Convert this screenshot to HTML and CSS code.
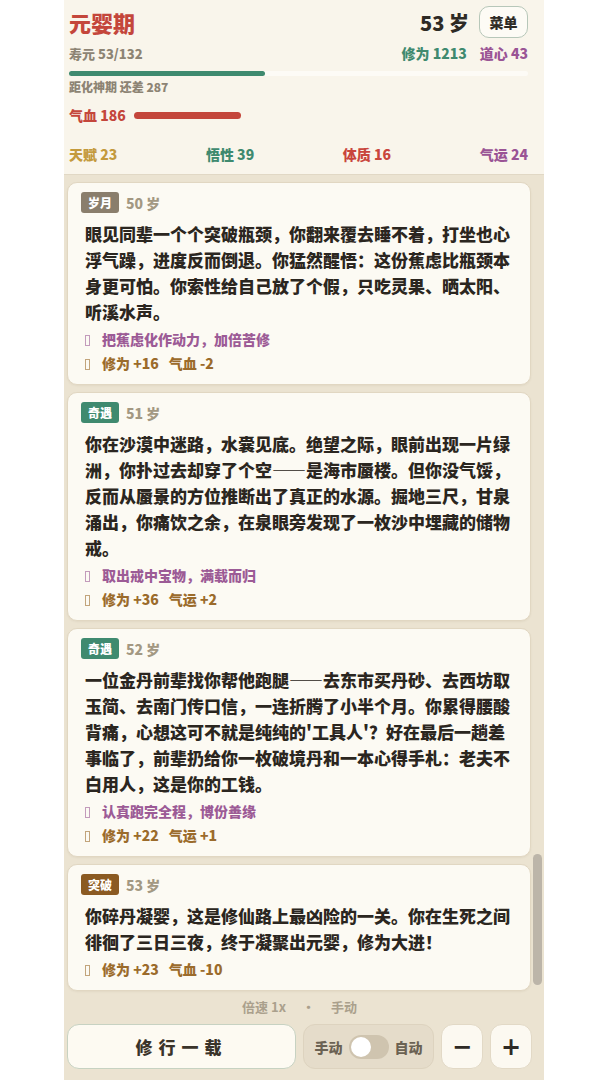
FILE: index.html
```html
<!DOCTYPE html>
<html lang="zh">
<head>
  <meta charset="UTF-8" />
  <title>修仙人生</title>
  <link rel="stylesheet" href="styles.css">
</head>
<body>
  <div class="app">

    <header class="status">
      <div class="row top">
        <h1 class="realm">元婴期</h1>
        <div class="age-box">
          <span class="age">53 岁</span>
          <button class="menu-btn">菜单</button>
        </div>
      </div>
      <div class="row meta">
        <span class="life">寿元 53/132</span>
        <span class="cult">
          <b class="green">修为 1213</b>
          <b class="purple">道心 43</b>
        </span>
      </div>
      <div class="bar"><div class="bar-fill" style="width: 42.6%"></div></div>
      <div class="next">距化神期 还差 287</div>
      <div class="hp">
        <span>气血 186</span>
        <div class="hp-bar" style="width: 107px"></div>
      </div>
      <div class="stats">
        <span class="gold">天赋 23</span>
        <span class="green">悟性 39</span>
        <span class="red">体质 16</span>
        <span class="purple">气运 24</span>
      </div>
    </header>

    <main class="log">
      <div class="scroll-thumb"></div>

      <div class="card">
        <div class="card-head"><span class="tag tag-time">岁月</span><span class="card-age">50 岁</span></div>
        <p class="story">眼见同辈一个个突破瓶颈，你翻来覆去睡不着，打坐也心浮气躁，进度反而倒退。你猛然醒悟：这份蕉虑比瓶颈本身更可怕。你索性给自己放了个假，只吃灵果、晒太阳、听溪水声。</p>
        <div class="choice"><i class="tofu"></i>把蕉虑化作动力，加倍苦修</div>
        <div class="effect"><i class="tofu"></i>修为 +16<span>气血 -2</span></div>
      </div>

      <div class="card">
        <div class="card-head"><span class="tag tag-luck">奇遇</span><span class="card-age">51 岁</span></div>
        <p class="story">你在沙漠中迷路，水囊见底。绝望之际，眼前出现一片绿洲，你扑过去却穿了个空——是海市蜃楼。但你没气馁，反而从蜃景的方位推断出了真正的水源。掘地三尺，甘泉涌出，你痛饮之余，在泉眼旁发现了一枚沙中埋藏的储物戒。</p>
        <div class="choice"><i class="tofu"></i>取出戒中宝物，满载而归</div>
        <div class="effect"><i class="tofu"></i>修为 +36<span>气运 +2</span></div>
      </div>

      <div class="card">
        <div class="card-head"><span class="tag tag-luck">奇遇</span><span class="card-age">52 岁</span></div>
        <p class="story">一位金丹前辈找你帮他跑腿——去东市买丹砂、去西坊取玉简、去南门传口信，一连折腾了小半个月。你累得腰酸背痛，心想这可不就是纯纯的'工具人'？好在最后一趟差事临了，前辈扔给你一枚破境丹和一本心得手札：老夫不白用人，这是你的工钱。</p>
        <div class="choice"><i class="tofu"></i>认真跑完全程，博份善缘</div>
        <div class="effect"><i class="tofu"></i>修为 +22<span>气运 +1</span></div>
      </div>

      <div class="card">
        <div class="card-head"><span class="tag tag-break">突破</span><span class="card-age">53 岁</span></div>
        <p class="story">你碎丹凝婴，这是修仙路上最凶险的一关。你在生死之间徘徊了三日三夜，终于凝聚出元婴，修为大进！</p>
        <div class="effect"><i class="tofu"></i>修为 +23<span>气血 -10</span></div>
      </div>
    </main>

    <footer class="controls">
      <div class="speed">倍速 1x<span class="dot">·</span>手动</div>
      <div class="actions">
        <button class="btn-main">修行一载</button>
        <div class="mode">
          <span>手动</span>
          <span class="switch"><span class="knob"></span></span>
          <span>自动</span>
        </div>
        <button class="btn-step">−</button>
        <button class="btn-step">+</button>
      </div>
    </footer>

  </div>
</body>
</html>
```

FILE: styles.css
```css
body {
  margin: 0;
  background-color: #ffffff;
  font-family: "Noto Sans CJK SC", "Noto Sans", sans-serif;
  color: #2b2620;
}
.app {
  width: 480px;
  height: 1080px;
  margin: 0 auto;
  display: flex;
  flex-direction: column;
  background-color: #ebe3d1;
  overflow: hidden;
}

/* Cabecera de estado */
.status {
  box-sizing: border-box;
  height: 175px;
  padding: 6px 16px 0 5px;
  background-color: #f9f5eb;
  border-bottom: 1px solid #e1d8c5;
  font-weight: 900;
}
.row {
  display: flex;
  justify-content: space-between;
  align-items: center;
}
.realm {
  margin: 0;
  font-size: 22px;
  line-height: 32px;
  font-weight: 900;
  color: #c4463b;
}
.age-box {
  display: flex;
  align-items: center;
}
.age {
  font-size: 20px;
  color: #2e2a25;
  margin-right: 10px;
}
.menu-btn {
  width: 49px;
  height: 32px;
  padding: 0;
  border: 1px solid #b7c7b9;
  border-radius: 10px;
  background-color: #fdfbf5;
  font-family: inherit;
  font-size: 14px;
  font-weight: 900;
  color: #2e2a25;
}
.meta {
  margin-top: 6px;
  height: 18px;
  font-size: 13px;
}
.life {
  color: #8d8474;
}
.cult b {
  font-size: 14px;
  font-weight: 900;
  margin-left: 10px;
}
.green { color: #3f8a6f; }
.purple { color: #9a5495; }
.gold { color: #c49a3c; }
.red { color: #c9463d; }

.bar {
  margin-top: 9px;
  height: 5px;
  border-radius: 3px;
  background-color: #fdfbf6;
}
.bar-fill {
  height: 100%;
  border-radius: 3px;
  background-color: #3f8a6f;
}
.next {
  margin-top: 3px;
  font-size: 12px;
  line-height: 16px;
  color: #8d8474;
}
.hp {
  margin-top: 11px;
  display: flex;
  align-items: center;
  height: 18px;
  font-size: 14px;
  color: #c4463b;
}
.hp-bar {
  height: 7px;
  margin-left: 8px;
  border-radius: 4px;
  background-color: #c4463b;
}
.stats {
  margin-top: 21px;
  display: flex;
  justify-content: space-between;
  font-size: 14px;
  line-height: 18px;
}

/* Registro de eventos */
.log {
  position: relative;
  flex: 1;
  padding: 7px 13px 0 3px;
  display: flex;
  flex-direction: column;
  gap: 7px;
}
.scroll-thumb {
  position: absolute;
  right: 2px;
  top: 679px;
  width: 9px;
  height: 131px;
  border-radius: 5px;
  background-color: #bcb5a9;
}
.card {
  background-color: #fcfaf3;
  border: 1px solid #e1d7c2;
  border-radius: 10px;
  padding: 9px 13px 9px 13px;
  box-shadow: 0 1px 2px rgba(120, 100, 60, 0.08);
}
.card-head {
  display: flex;
  align-items: center;
  height: 21px;
}
.tag {
  height: 21px;
  line-height: 21px;
  padding: 0 7px;
  border-radius: 3px;
  color: #fff;
  font-size: 12px;
  font-weight: 900;
}
.tag-time { background-color: #8a7e6c; }
.tag-luck { background-color: #3f8a6f; }
.tag-break { background-color: #8b5a22; }
.card-age {
  margin-left: 7px;
  font-size: 14px;
  font-weight: 900;
  color: #a39882;
}
.story {
  margin: 8px 0 2px 0;
  padding-left: 4px;
  font-size: 17px;
  line-height: 26px;
  font-weight: 900;
  color: #2b2620;
}
.choice, .effect {
  padding-left: 4px;
  font-size: 14px;
  line-height: 24px;
  font-weight: 900;
}
.choice { color: #9c5b96; }
.effect { color: #9b6b2b; }
.effect span { margin-left: 10px; }
.tofu {
  display: inline-block;
  box-sizing: border-box;
  width: 5px;
  height: 11px;
  margin-right: 12px;
  border: 1px solid currentColor;
  opacity: 0.6;
  vertical-align: -1px;
}

/* Controles */
.controls {
  padding: 4px 12px 11px 3px;
}
.speed {
  text-align: center;
  font-size: 13px;
  line-height: 18px;
  color: #aaa08c;
  margin-bottom: 8px;
  font-weight: 700;
}
.dot {
  margin: 0 16px;
}
.actions {
  display: flex;
  gap: 7px;
  height: 45px;
}
.btn-main {
  flex: 1;
  border: 1px solid #c7d2c2;
  border-radius: 12px;
  background-color: #fdfaf2;
  font-family: inherit;
  font-size: 17px;
  font-weight: 900;
  letter-spacing: 6px;
  color: #3a332a;
  padding-left: 6px;
}
.mode {
  width: 131px;
  box-sizing: border-box;
  display: flex;
  align-items: center;
  justify-content: center;
  gap: 6px;
  border: 1px solid #ddd3bf;
  border-radius: 12px;
  background-color: #e5dcca;
  font-size: 14px;
  font-weight: 900;
  color: #6b6253;
}
.switch {
  width: 40px;
  height: 24px;
  border-radius: 12px;
  background-color: #cfc4af;
  display: flex;
  align-items: center;
  padding-left: 2px;
  box-sizing: border-box;
}
.knob {
  width: 20px;
  height: 20px;
  border-radius: 50%;
  background-color: #fff;
}
.btn-step {
  width: 42px;
  padding: 0;
  border: 1px solid #e2d9c6;
  border-radius: 12px;
  background-color: #fcf9f1;
  font-family: "DejaVu Sans", sans-serif;
  font-size: 24px;
  font-weight: 700;
  color: #2e2a25;
}
```
